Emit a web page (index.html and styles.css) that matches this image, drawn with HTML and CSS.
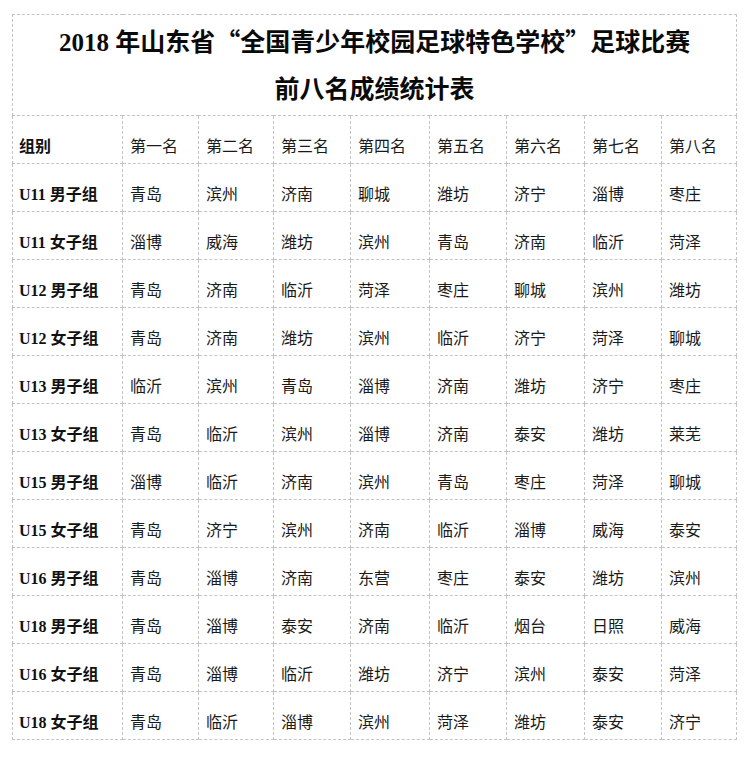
FILE: index.html
```html
<!DOCTYPE html>
<html lang="zh-CN">
<head>
<meta charset="utf-8">
<title>成绩统计表</title>
<link rel="stylesheet" href="styles.css">
</head>
<body>
<div class="page">
<table class="results">
<colgroup>
<col class="c-group"><col class="c1"><col class="c2"><col class="c3"><col class="c4"><col class="c5"><col class="c6"><col class="c7"><col class="c8">
</colgroup>
<tr><td class="title" colspan="9">2018 年山东省<span class="q">“</span>全国青少年校园足球特色学校<span class="q">”</span>足球比赛<br>前八名成绩统计表</td></tr>
<tr><td class="grp">组别</td><td>第一名</td><td>第二名</td><td>第三名</td><td>第四名</td><td>第五名</td><td>第六名</td><td>第七名</td><td>第八名</td></tr>
<tr><td class="grp">U11 男子组</td><td>青岛</td><td>滨州</td><td>济南</td><td>聊城</td><td>潍坊</td><td>济宁</td><td>淄博</td><td>枣庄</td></tr>
<tr><td class="grp">U11 女子组</td><td>淄博</td><td>威海</td><td>潍坊</td><td>滨州</td><td>青岛</td><td>济南</td><td>临沂</td><td>菏泽</td></tr>
<tr><td class="grp">U12 男子组</td><td>青岛</td><td>济南</td><td>临沂</td><td>菏泽</td><td>枣庄</td><td>聊城</td><td>滨州</td><td>潍坊</td></tr>
<tr><td class="grp">U12 女子组</td><td>青岛</td><td>济南</td><td>潍坊</td><td>滨州</td><td>临沂</td><td>济宁</td><td>菏泽</td><td>聊城</td></tr>
<tr><td class="grp">U13 男子组</td><td>临沂</td><td>滨州</td><td>青岛</td><td>淄博</td><td>济南</td><td>潍坊</td><td>济宁</td><td>枣庄</td></tr>
<tr><td class="grp">U13 女子组</td><td>青岛</td><td>临沂</td><td>滨州</td><td>淄博</td><td>济南</td><td>泰安</td><td>潍坊</td><td>莱芜</td></tr>
<tr><td class="grp">U15 男子组</td><td>淄博</td><td>临沂</td><td>济南</td><td>滨州</td><td>青岛</td><td>枣庄</td><td>菏泽</td><td>聊城</td></tr>
<tr><td class="grp">U15 女子组</td><td>青岛</td><td>济宁</td><td>滨州</td><td>济南</td><td>临沂</td><td>淄博</td><td>威海</td><td>泰安</td></tr>
<tr><td class="grp">U16 男子组</td><td>青岛</td><td>淄博</td><td>济南</td><td>东营</td><td>枣庄</td><td>泰安</td><td>潍坊</td><td>滨州</td></tr>
<tr><td class="grp">U18 男子组</td><td>青岛</td><td>淄博</td><td>泰安</td><td>济南</td><td>临沂</td><td>烟台</td><td>日照</td><td>威海</td></tr>
<tr><td class="grp">U16 女子组</td><td>青岛</td><td>淄博</td><td>临沂</td><td>潍坊</td><td>济宁</td><td>滨州</td><td>泰安</td><td>菏泽</td></tr>
<tr><td class="grp">U18 女子组</td><td>青岛</td><td>临沂</td><td>淄博</td><td>滨州</td><td>菏泽</td><td>潍坊</td><td>泰安</td><td>济宁</td></tr>
</table>
</div>
</body>
</html>
```

FILE: styles.css
```css
html, body {
  margin: 0;
  padding: 0;
  background: #ffffff;
}

.page {
  padding: 14px 0 0 12px;
}

.results {
  border-collapse: collapse;
  table-layout: fixed;
  width: 724px;
  font-family: "Liberation Serif", "Noto Sans CJK SC", serif;
  color: #1a1a1a;
}

.c-group { width: 110px; }
.c1 { width: 76px; }
.c2 { width: 75px; }
.c3 { width: 77px; }
.c4 { width: 79px; }
.c5 { width: 77px; }
.c6 { width: 78px; }
.c7 { width: 77px; }
.c8 { width: 75px; }

.results td {
  border: 1px dashed #c4c4c4;
  padding: 23px 8px 8px 7px;
  font-size: 16px;
  line-height: 16px;
  font-weight: 400;
  white-space: nowrap;
  vertical-align: top;
}

.results td.grp {
  font-weight: 700;
  padding-left: 6px;
  color: #111;
}

.results td.title {
  text-align: center;
  font-size: 25px;
  line-height: 47px;
  font-weight: 700;
  padding: 4px 0 2px;
  color: #0a0a0a;
}

.q {
  font-family: "Noto Sans CJK SC", sans-serif;
  line-height: 20px;
}
```
